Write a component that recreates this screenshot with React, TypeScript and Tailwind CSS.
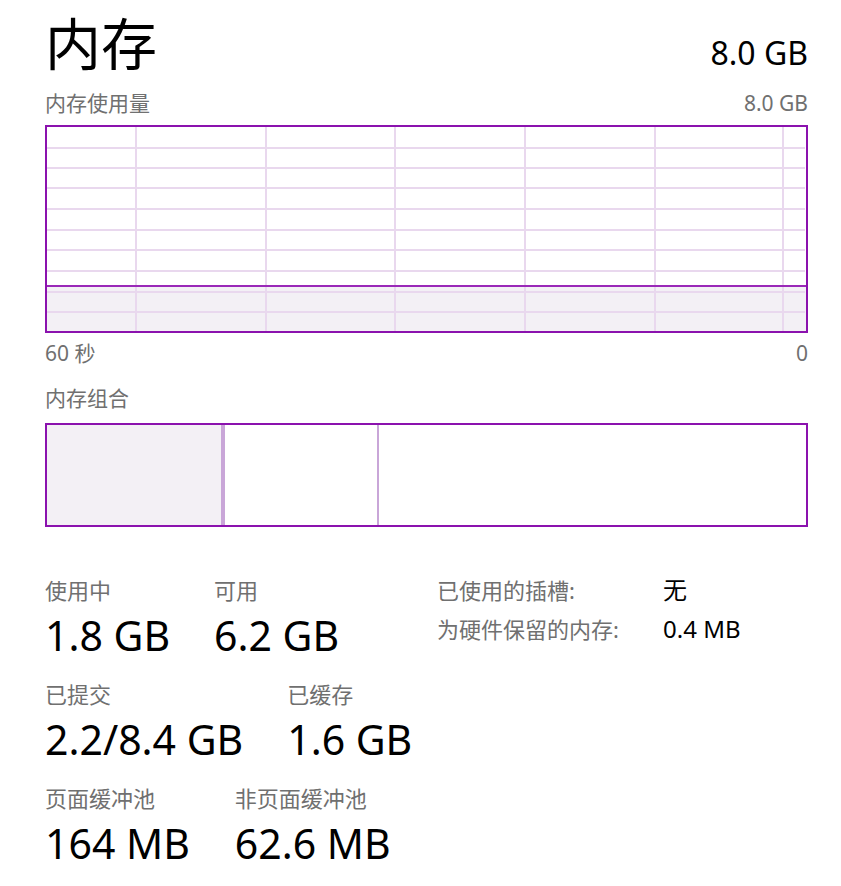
import React from "react";

const vLines = [89, 219, 348, 478, 608, 736];
const hLines = [21, 41, 61, 82, 103, 123, 144, 165, 185];

const UsageGraph = () => (
  <div className="mt-[10px] h-[208px] border-2 border-[#8b12ae]">
    <svg className="block h-full w-full" viewBox="0 0 759 204" preserveAspectRatio="none">
      <rect x={0} y={159} width={759} height={45} fill="#f3f0f5" />
      {hLines.map((y) => (
        <line key={`h${y}`} x1={0} x2={758} y1={y} y2={y} stroke="#e9d8ee" strokeWidth={2} />
      ))}
      {vLines.map((x) => (
        <line key={`v${x}`} x1={x} x2={x} y1={0} y2={204} stroke="#e9d8ee" strokeWidth={2} />
      ))}
      <line x1={0} x2={759} y1={159} y2={159} stroke="#9a28b8" strokeWidth={2} />
    </svg>
  </div>
);

const Stat = ({ label, value }: { label: string; value: string }) => (
  <div className="flex flex-col">
    <span className="text-[22px] leading-[26px] text-[#707070]">{label}</span>
    <span className="mt-[10px] text-[41px] leading-[44px] text-black">{value}</span>
  </div>
);

export default function App() {
  return (
    <div className="h-[886px] w-[841px] overflow-hidden bg-white pl-[45px] pr-[33px] font-['Noto_Sans','Noto_Sans_CJK_SC',sans-serif] text-black">
      <div className="flex items-baseline justify-between pt-[15px]">
        <h1 className="text-[56px] leading-[56px] font-normal">内存</h1>
        <span className="text-[32px] leading-[40px]">8.0 GB</span>
      </div>

      <div className="mt-[18px] flex justify-between text-[21px] leading-[24px] text-[#707070]">
        <span>内存使用量</span>
        <span>8.0 GB</span>
      </div>

      <UsageGraph />

      <div className="mt-[8px] flex justify-between text-[21px] leading-[24px] text-[#707070]">
        <span>60 秒</span>
        <span>0</span>
      </div>

      <div className="mt-[21px] text-[21px] leading-[24px] text-[#707070]">内存组合</div>

      <div className="mt-[13px] flex h-[104px] border-2 border-[#8b12ae]">
        <div className="w-[174px] bg-[#f3f0f5]" />
        <div className="w-[4px] bg-[#c9a6d8]" />
        <div className="w-[152px]" />
        <div className="w-[2px] bg-[#c9a6d8]" />
        <div className="flex-1" />
      </div>

      <div className="mt-[50px] flex">
        <div className="flex w-[392px] flex-col gap-[24px]">
          <div className="flex gap-[44px]">
            <Stat label="使用中" value="1.8 GB" />
            <Stat label="可用" value="6.2 GB" />
          </div>
          <div className="flex gap-[44px]">
            <Stat label="已提交" value="2.2/8.4 GB" />
            <Stat label="已缓存" value="1.6 GB" />
          </div>
          <div className="flex gap-[45px]">
            <Stat label="页面缓冲池" value="164 MB" />
            <Stat label="非页面缓冲池" value="62.6 MB" />
          </div>
        </div>

        <div className="flex flex-col gap-[13px]">
          <div className="flex items-baseline">
            <span className="w-[226px] text-[22px] leading-[26px] text-[#707070]">已使用的插槽:</span>
            <span className="text-[24px] leading-[26px] text-black">无</span>
          </div>
          <div className="flex items-baseline">
            <span className="w-[226px] text-[22px] leading-[26px] text-[#707070]">为硬件保留的内存:</span>
            <span className="text-[24px] leading-[26px] text-black">0.4 MB</span>
          </div>
        </div>
      </div>
    </div>
  );
}
